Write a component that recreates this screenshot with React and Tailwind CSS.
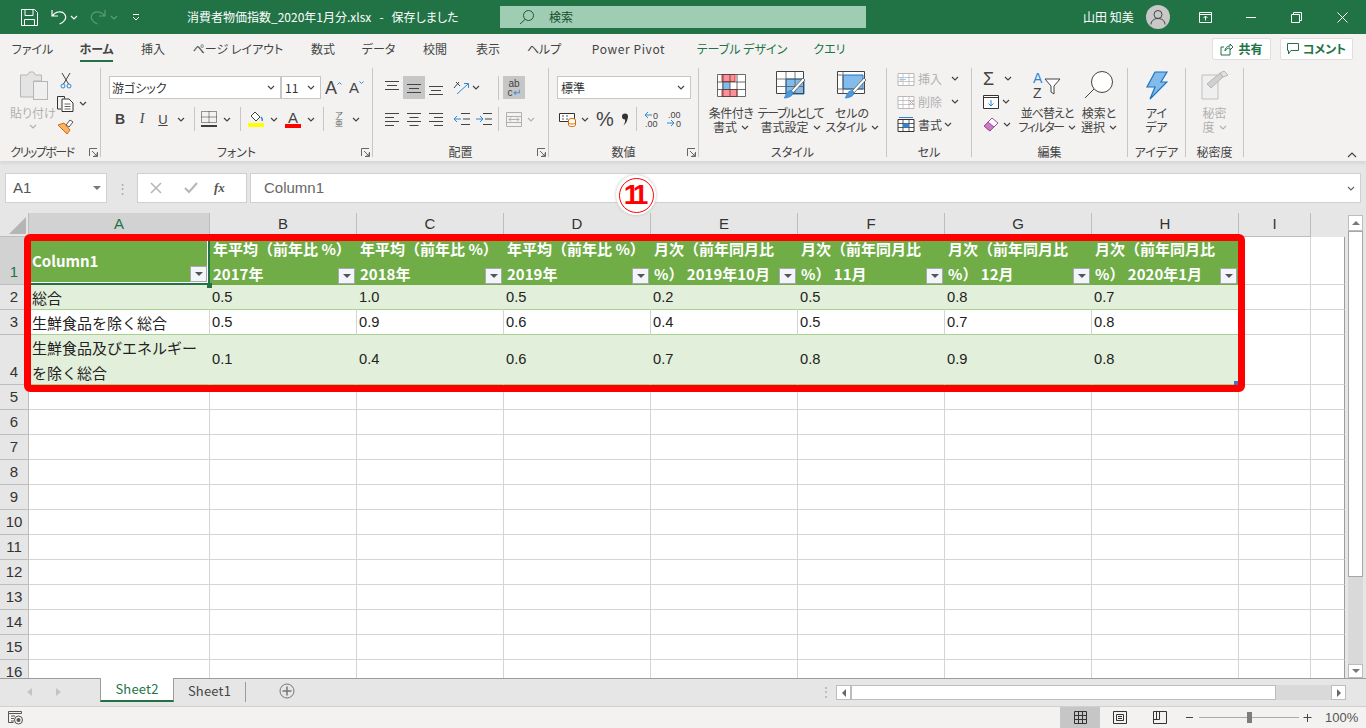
import React from 'react';

const F = '[font-family:"Noto_Sans_CJK_JP","Noto_Sans",sans-serif]';
const P = '[font-feature-settings:"palt"]';

const Chev = ({ c = '#444', className = '' }) => (
  <svg width="8" height="5" viewBox="0 0 8 5" className={`shrink-0 ${className}`}><path d="M1 1l3 3 3-3" fill="none" stroke={c} strokeWidth="1.2" /></svg>
);

const Launcher = ({ className = '' }) => (
  <svg width="9" height="9" viewBox="0 0 9 9" className={`shrink-0 ${className}`}><path d="M.5 8V.5H8M8.500 4v4.500H4M3 3l5 5M8 5v3H5" fill="none" stroke="#666" /></svg>
);

const Sep = ({ h = 'h-[24px]', ml = '' }) => <div className={`w-px ${h} bg-[#c8c6c4] shrink-0 ${ml}`} />;

const HAlign = ({ a }) => {
  const lines = [14, 9, 14, 9];
  return (
    <svg width="16" height="14" viewBox="0 0 16 14">
      {lines.map((x, i) => {
        const sx = a === 'l' ? 1 : a === 'c' ? (16 - x) / 2 : 15 - x;
        return <path key={i} d={`M${sx} ${1.5 + i * 4}h${x}`} stroke="#444" strokeWidth="1" />;
      })}
    </svg>
  );
};

const VAlign = ({ y }) => (
  <svg width="16" height="16" viewBox="0 0 16 16">
    <path d={`M1 ${y}.5h14M3 ${y + 4}.5h10M1 ${y + 8}.5h14`} stroke="#444" />
  </svg>
);

const ClipIcon = () => (
  <svg width="28" height="30" viewBox="0 0 28 30">
    <path d="M.5 4h7l2-3h4l2 3h6v6h-8v16H.5z" fill="#e4e4e4" stroke="#b5b5b5" />
    <rect x="13.500" y="10.500" width="14" height="18" fill="#efefef" stroke="#b5b5b5" />
  </svg>
);

const Scissors = () => (
  <svg width="12" height="17" viewBox="0 0 12 17"><path d="M2 1l6.500 11M10 1L3.500 12" stroke="#444" fill="none" /><circle cx="3" cy="14" r="2" fill="none" stroke="#2b88d8" /><circle cx="9" cy="14" r="2" fill="none" stroke="#2b88d8" /></svg>
);

const CopyIcon = () => (
  <svg width="17" height="16" viewBox="0 0 17 16"><path d="M4 13H.5V.5h7v2" fill="none" stroke="#333" /><path d="M5 3h7l4 4v8.500H5z" fill="#fff" stroke="#333" /><path d="M7.500 8h6M7.500 10.500h6M7.500 13h6" stroke="#666" /></svg>
);

const BrushIcon = () => (
  <svg width="17" height="16" viewBox="0 0 17 16"><path d="M1 6l6-2 6 7-3 4z" fill="#f7b26b" stroke="#d86a00" /><path d="M9 6l4-5 3 2-4 5z" fill="#fff" stroke="#555" /></svg>
);

const CondIcon = () => (
  <svg width="29" height="23" viewBox="0 0 29 23">
    <path fill="#fff" d="M0 0h29v23H0z" />
    <path d="M5 .5h13v7H5z" fill="#ff8f97" stroke="#d13438" />
    <path d="M5 8h8v7H5z" fill="#83bcea" />
    <path d="M5 15.500h15v7H5z" fill="#ff8f97" stroke="#d13438" />
    <path d="M.5.500h28v22H.5zM.5 8h28M.5 15.500h28M6 .500v22M13 .500v22M20 .500v22" fill="none" stroke="#444" strokeWidth="0.800" />
  </svg>
);

const TableIcon = ({ variant }) => (
  <svg width="30" height="28" viewBox="0 0 30 28">
    <path fill="#fff" d="M1 1h27v22H1z" />
    {variant === 'table'
      ? <path d="M10 8h18v15H10z" fill="#83bcea" stroke="#1a73c4" />
      : <path d="M6 4h20v14H6z" fill="#83bcea" stroke="#1a73c4" />}
    <path d="M.5.500h27v22H.5z" fill="none" stroke="#444" />
    <path d={variant === 'table' ? 'M.5 8h27M.5 15.500h27M10 .500v22M19 .500v22' : 'M.5 4h5M6 .500v22M.5 18h27'} fill="none" stroke="#555" strokeWidth="0.800" />
    <path d="M15 20L27 7l2 2-12 13z" fill="#fff" stroke="#555" strokeWidth="0.800" />
    <path d="M8 27c2-2 1-5 5-7 2-1 4 0 4 2 0 3-5 5-9 5z" fill="#4c98d8" stroke="#2b7cd3" strokeWidth="0.600" />
  </svg>
);

const CellIcon = ({ kind }) => {
  const g = kind !== 'format';
  const s = g ? '#b9b9b9' : '#333';
  return (
    <svg width="18" height="15" viewBox="0 0 18 15">
      <path d="M1 2.500h16v12H1z" fill="#fff" stroke={s} />
      <path d="M1 6.500h16M1 10.500h16M6 2.500v12M12 2.500v12" stroke={s} strokeWidth="0.800" />
      {kind === 'format' && <path d="M6 6.500h6v4H6z" fill="#2b88d8" />}
      {kind === 'format' && <path d="M2 .500h14" stroke="#2b88d8" />}
      {kind === 'insert' && <path d="M9 8.500H3m2-2l-2 2 2 2" fill="none" stroke="#9fc7ea" />}
      {kind === 'del' && <path d="M12 6l5 5m0-5l-5 5" fill="none" stroke="#c9a0a0" />}
    </svg>
  );
};

const Combo = ({ w, label, pl = 'pl-[2px]' }) => (
  <div className={`${w} h-[23px] bg-white border border-[#c8c6c4] flex items-center justify-between ${pl} pr-[5px] shrink-0`}>
    <span className="text-[12px] leading-none text-[#333]">{label}</span>
    <Chev />
  </div>
);

const Big = ({ icon, l1, l2, chev, w, c = '#444', gray = false, t1 = '', t2 = '' }) => (
  <div className={`${w} shrink-0 flex flex-col items-center`}>
    <div className="h-[36px] flex items-center justify-center">{icon}</div>
    <div className={`mt-[3px] text-[12px] leading-[14px] whitespace-nowrap ${t1} ${gray ? 'text-[#b1b1b1]' : 'text-[#444]'}`}>{l1}</div>
    <div className={`text-[12px] leading-[14px] whitespace-nowrap flex items-center gap-[4px] ${gray ? 'text-[#b1b1b1]' : 'text-[#444]'}`}><span className={t2}>{l2}</span>{chev && <Chev c={c} />}</div>
  </div>
);

const Group = ({ w, label, launcher, children }) => (
  <div className={`${w} shrink-0 h-full flex`}>
    <div className="flex-1 min-w-0 flex flex-col">
      <div className="flex-1 min-h-0 pt-[12px] flex">{children}</div>
      <div className="h-[18px] relative flex items-center justify-center text-[12px] leading-none text-[#444] whitespace-nowrap">
        {label}
        {launcher && <Launcher className="absolute right-[2px] top-[5px]" />}
      </div>
    </div>
    <div className="w-px h-[89px] mt-[4px] bg-[#c8c6c4]" />
  </div>
);

const tabs = [
  ['ファイル', 'ml-[14px] w-[37px]', ''], ['ホーム', 'ml-[29px] w-[33px]', 'font-bold'], ['挿入', 'ml-[27px] w-[26px]', ''], ['ページ レイアウト', 'ml-[29px] w-[86px]', ''],
  ['数式', 'ml-[29px] w-[26px]', ''], ['データ', 'ml-[26px] w-[33px]', ''], ['校閲', 'ml-[27px] w-[26px]', ''], ['表示', 'ml-[27px] w-[26px]', ''], ['ヘルプ', 'ml-[27px] w-[32px]', ''],
  ['Power Pivot', 'ml-[31px] w-[75px]', 'tracking-[0.6px]'], ['テーブル デザイン', 'ml-[32px] w-[88px]', 'text-[#217346]'], ['クエリ', 'ml-[29px] w-[29px]', 'text-[#217346]'],
];

const TitleBar = () => (
  <div className={`h-[34px] bg-[#217346] text-white flex items-center shrink-0 ${P}`}>
    <svg width="17" height="17" viewBox="0 0 17 17" className="ml-[21px]"><path d="M.5.500h13l3 3v13H.5zM4 .500v6h8v-6M3.500 16.500v-6h10v6" fill="none" stroke="#fff" /></svg>
    <svg width="18" height="18" viewBox="0 0 18 18" className="ml-[12px]"><path d="M2 2v6h6M2.500 8c2-4 9-6 12-2 3 4 0 8-5 10" fill="none" stroke="#fff" strokeWidth="1.200" /></svg>
    <Chev c="#fff" className="ml-[2px]" />
    <svg width="17" height="18" viewBox="0 0 17 18" className="ml-[12px]"><path d="M15 2v6H9M14.500 8c-2-4-9-6-12-2-3 4 0 8 5 10" fill="none" stroke="#5d9a7b" strokeWidth="1.200" /></svg>
    <Chev c="#5d9a7b" className="ml-[3px]" />
    <svg width="8" height="8" viewBox="0 0 8 8" className="ml-[14px]"><path d="M1 1.500h6M1 4l3 3 3-3" fill="none" stroke="#fff" /></svg>
    <div className="ml-[47px] w-[313px] text-[12px] leading-none whitespace-pre">消費者物価指数_2020年1月分.xlsx   -   保存しました</div>
    <div className="w-[366px] h-[22px] bg-[#9fcdb3] flex items-center text-[#174f30] text-[12px]">
      <svg width="16" height="16" viewBox="0 0 16 16" className="ml-[19px]"><circle cx="9.500" cy="6.500" r="5" fill="none" stroke="#1c5a38" /><path d="M6 10.500L1 15" stroke="#1c5a38" /></svg>
      <span className="ml-[14px]">検索</span>
    </div>
    <div className="ml-[217px] w-[52px] text-[12px] leading-none whitespace-nowrap">山田 知美</div>
    <div className="ml-[11px] w-[24px] h-[24px] rounded-full bg-[#c8c8c8] flex items-center justify-center">
      <svg width="16" height="16" viewBox="0 0 16 16"><circle cx="8" cy="5.500" r="4" fill="none" stroke="#444" /><path d="M1 15.500c0-8 14-8 14 0" fill="none" stroke="#444" /></svg>
    </div>
    <svg width="13" height="11" viewBox="0 0 13 11" className="ml-[29px]"><path d="M.5.500h12v10H.5zM.5 2.500h12M6.500 8.500v-4M4.500 6l2-2 2 2" fill="none" stroke="#fff" /></svg>
    <div className="ml-[34px] w-[10px] h-px bg-white" />
    <svg width="11" height="11" viewBox="0 0 11 11" className="ml-[35px]"><path d="M.5 2.500h8v8h-8zM2.500 2.500v-2h8v8h-2" fill="none" stroke="#fff" /></svg>
    <svg width="11" height="11" viewBox="0 0 11 11" className="ml-[35px]"><path d="M.5.500l10 10m0-10l-10 10" stroke="#fff" /></svg>
  </div>
);

const TabRow = () => (
  <div className={`h-[30px] bg-[#f3f2f1] flex items-center shrink-0 text-[12px] text-[#444] ${P}`}>
    {tabs.map(([t, ml, cls]) => (
      <div key={t} className={`${ml} ${cls} shrink-0 relative whitespace-nowrap h-full flex items-center justify-center leading-none`}>
        {t}
        {t === 'ホーム' && <div className="absolute left-0 right-0 bottom-[2px] h-[2px] bg-[#217346]" />}
      </div>
    ))}
    <div className="ml-auto flex items-center gap-[9px] mr-[13px]">
      <div className="w-[59px] h-[22px] bg-white border border-[#e1dfdd] rounded-[2px] flex items-center justify-center gap-[5px] text-[#217346] font-bold">
        <svg width="13" height="13" viewBox="0 0 13 13"><path d="M10 7v5H1V4h3M5 8c0-3 2-5 5-5V1l3 3-3 3V5C8 5 6 6 5 8z" fill="none" stroke="#217346" /></svg>
        共有
      </div>
      <div className="w-[73px] h-[22px] bg-white border border-[#e1dfdd] rounded-[2px] flex items-center justify-center gap-[4px] text-[#217346] font-bold">
        <svg width="12" height="12" viewBox="0 0 12 12"><path d="M.5.500h11v7H4L1.500 11V7.500h-1z" fill="none" stroke="#217346" /></svg>
        コメント
      </div>
    </div>
  </div>
);

const Ribbon = () => (
  <div className={`h-[97px] bg-[#f3f2f1] flex shrink-0 shadow-[0_3px_2px_#d9d9d9] relative z-10 ${P}`}>
    <Group w="w-[101px]" label={<span className="-ml-[16px] tracking-[-1.5px]">クリップボード</span>} launcher>
      <div className="w-[57px] pl-[20px] -mt-[5px] flex flex-col items-start">
        <ClipIcon />
        <div className="-ml-[10px] mt-[5px] text-[12px] leading-[14px] text-[#b1b1b1] whitespace-nowrap">貼り付け</div>
        <Chev c="#b1b1b1" className="mt-[4px] ml-[9px]" />
      </div>
      <div className="flex flex-col -mt-[7px]">
        <div className="h-[23px] w-[17px] flex items-center justify-center"><Scissors /></div>
        <div className="h-[23px] flex items-center gap-[5px]"><CopyIcon /><Chev /></div>
        <div className="h-[23px] flex items-center"><BrushIcon /></div>
      </div>
    </Group>
    <Group w="w-[272px]" label="フォント" launcher>
      <div className="pl-[8px] flex flex-col">
        <div className="flex items-center">
          <Combo w="w-[172px]" label="游ゴシック" />
          <Combo w="w-[40px]" label="11" pl="pl-[3px]" />
          <span className="ml-[4px] text-[18px] leading-none text-[#444] font-['Liberation_Sans']">A</span>
          <svg width="5" height="4" viewBox="0 0 5 4" className="-mt-[10px]"><path d="M.5 3.500l2-2 2 2" fill="none" stroke="#2b88d8" /></svg>
          <span className="ml-[7px] text-[15px] leading-none text-[#444] font-['Liberation_Sans']">A</span>
          <svg width="5" height="4" viewBox="0 0 5 4" className="-mt-[10px]"><path d="M.5.500l2 2 2-2" fill="none" stroke="#2b88d8" /></svg>
        </div>
        <div className="mt-[8px] h-[24px] flex items-center text-[#444]">
          <span className="w-[22px] text-center text-[14px] font-bold leading-none font-['Liberation_Sans']">B</span>
          <span className="w-[22px] text-center text-[14px] italic leading-none font-['Liberation_Serif']">I</span>
          <span className="w-[20px] text-center text-[13px] underline leading-none font-['Liberation_Sans']">U</span>
          <Chev className="ml-[4px]" />
          <Sep ml="ml-[9px]" />
          <svg width="16" height="16" viewBox="0 0 16 16" className="ml-[6px]"><path d="M.5.500h15v11H.500zM8 .500v11M.5 6h15" fill="none" stroke="#333" strokeDasharray="1 1" /><path d="M0 15h16" stroke="#000" strokeWidth="1.500" /></svg>
          <Chev className="ml-[6px]" />
          <Sep ml="ml-[9px]" />
          <div className="ml-[7px] w-[16px] flex flex-col items-center">
            <svg width="15" height="11" viewBox="0 0 15 11"><path d="M2 5l4-4 5 5-4 4z" fill="#fff" stroke="#444" /><path d="M12 6c1 1 2 2 1 4" fill="none" stroke="#2b88d8" strokeWidth="1.500" /></svg>
            <div className="w-[16px] h-[4px] bg-[#ffff00] mt-[1px]" />
          </div>
          <Chev className="ml-[6px]" />
          <div className="ml-[7px] w-[16px] flex flex-col items-center">
            <span className="text-[15px] leading-[13px] font-['Liberation_Sans']">A</span>
            <div className="w-[16px] h-[4px] bg-[#ff0000]" />
          </div>
          <Chev className="ml-[6px]" />
          <Sep ml="ml-[8px]" />
          <div className="ml-[7px] w-[16px] flex flex-col items-center text-[8px] leading-[8px] text-[#666]"><span>ア</span><span>亜</span></div>
          <Chev className="ml-[5px]" />
        </div>
      </div>
    </Group>
    <Group w="w-[176px]" label="配置" launcher>
      <div className="pl-[8px] flex flex-col">
        <div className="h-[23px] flex items-center">
          <div className="w-[22px] flex justify-center"><VAlign y={1} /></div>
          <div className="w-[22px] h-[23px] bg-[#c6c6c6] flex items-center justify-center"><VAlign y={4} /></div>
          <div className="w-[22px] flex justify-center"><VAlign y={6} /></div>
          <svg width="18" height="16" viewBox="0 0 18 16" className="ml-[6px]"><path d="M1 8l5-6M3 2l4 4" stroke="#444" fill="none" /><path d="M4 14L15 4M11 3.500h4.500V8" stroke="#2b88d8" fill="none" /></svg>
          <Chev className="ml-[1px]" />
          <Sep ml="ml-[18px]" />
          <div className="ml-[4px] w-[22px] h-[23px] bg-[#c6c6c6] flex flex-col items-center justify-center text-[10px] leading-[9px] text-[#444] font-['Liberation_Sans']"><span>ab</span><span>c<span className="text-[#2b88d8]">↵</span></span></div>
        </div>
        <div className="mt-[8px] h-[24px] flex items-center">
          <div className="w-[22px] flex justify-center"><HAlign a="l" /></div>
          <div className="w-[22px] flex justify-center"><HAlign a="c" /></div>
          <div className="w-[22px] flex justify-center"><HAlign a="r" /></div>
          <svg width="16" height="14" viewBox="0 0 16 14" className="ml-[7px]"><path d="M7 1.500h9M9 7h7M7 12.500h9" stroke="#444" /><path d="M7 7H0m3-3L0 7l3 3" fill="none" stroke="#2b88d8" /></svg>
          <svg width="16" height="14" viewBox="0 0 16 14" className="ml-[6px]"><path d="M7 1.500h9M9 7h7M7 12.500h9" stroke="#444" /><path d="M0 7h7M4 4l3 3-3 3" fill="none" stroke="#2b88d8" /></svg>
          <Sep ml="ml-[6px]" />
          <svg width="16" height="15" viewBox="0 0 16 15" className="ml-[7px]"><path d="M.5.500h15v14H.5zM.5 4.500h15M.5 10.500h15M3 7.500h10M5 5.500l-2 2 2 2M11 5.500l2 2-2 2" fill="none" stroke="#b1b1b1" /></svg>
          <Chev c="#b1b1b1" className="ml-[5px]" />
        </div>
      </div>
    </Group>
    <Group w="w-[150px]" label="数値" launcher>
      <div className="pl-[8px] flex flex-col">
        <Combo w="w-[134px]" label="標準" pl="pl-[3px]" />
        <div className="mt-[8px] h-[24px] flex items-center text-[#444]">
          <svg width="18" height="16" viewBox="0 0 18 16" className="ml-[2px]"><path d="M.5 2.500h15v8H.5z" fill="#fff" stroke="#333" /><path d="M3 5h2M3 8h2M7 5h2M7 8h2" stroke="#555" /><ellipse cx="13" cy="9" rx="3.500" ry="1.500" fill="#fff" stroke="#d86a00" /><path d="M9.500 9v5c0 2 7 2 7 0V9M9.500 11.500c0 2 7 2 7 0" fill="#fff" stroke="#d86a00" /></svg>
          <Chev className="ml-[4px]" />
          <span className="ml-[7px] w-[18px] text-[20px] leading-none font-['Liberation_Sans']">%</span>
          <svg width="8" height="13" viewBox="0 0 8 13" className="ml-[7px]"><circle cx="4" cy="3.500" r="3" fill="#333" /><path d="M6.500 3.500c.5 4-1.500 7-4 9 1-2 2-4 1.500-6z" fill="#333" /></svg>
          <Sep ml="ml-[7px]" />
          <svg width="16" height="16" viewBox="0 0 16 16" className="ml-[7px]"><path d="M8 4H1m3-3L1 4l3 3" fill="none" stroke="#2b88d8" /><text x="9" y="8" fontSize="9" fill="#444" fontFamily="Liberation Sans">0</text><text x="1" y="15.500" fontSize="9" fill="#444" fontFamily="Liberation Sans">.00</text></svg>
          <svg width="16" height="16" viewBox="0 0 16 16" className="ml-[7px]"><text x="1" y="7" fontSize="9" fill="#444" fontFamily="Liberation Sans">.00</text><path d="M0 12h7M4 9l3 3-3 3" fill="none" stroke="#2b88d8" /><text x="9" y="15.500" fontSize="9" fill="#444" fontFamily="Liberation Sans">0</text></svg>
        </div>
      </div>
    </Group>
    <Group w="w-[188px]" label="スタイル">
      <div className="flex -mt-[9px] pl-[4px]">
        <Big w="w-[56px]" icon={<CondIcon />} l1="条件付き" l2="書式" chev t1="tracking-[-0.5px]" />
        <Big w="w-[63px]" icon={<TableIcon variant="table" />} l1="テーブルとして" l2="書式設定" chev t1="tracking-[-1.3px]" />
        <Big w="w-[60px]" icon={<TableIcon variant="cell" />} l1="セルの" l2="スタイル" chev t2="tracking-[-0.5px]" />
      </div>
    </Group>
    <Group w="w-[85px]" label="セル">
      <div className="flex flex-col -mt-[9px] pl-[10px] text-[12px] leading-none">
        <div className="h-[23px] flex items-center text-[#b1b1b1]"><CellIcon kind="insert" /><span className="ml-[3px] w-[33px]">挿入</span><Chev /></div>
        <div className="h-[23px] flex items-center text-[#b1b1b1]"><CellIcon kind="del" /><span className="ml-[3px] w-[33px]">削除</span><Chev /></div>
        <div className="h-[23px] flex items-center text-[#444]"><CellIcon kind="format" /><span className="ml-[3px] w-[26px]">書式</span><Chev /></div>
      </div>
    </Group>
    <Group w="w-[156px]" label="編集">
      <div className="flex">
        <div className="flex flex-col -mt-[9px] pl-[11px] w-[46px]">
          <div className="h-[23px] flex items-center gap-[6px]"><span className="w-[15px] text-[18px] leading-none text-[#444] font-['Liberation_Sans']">Σ</span><Chev /></div>
          <div className="h-[23px] flex items-center gap-[3px]"><svg width="16" height="14" viewBox="0 0 16 14"><path d="M.5.500h15v13H.5zM.5 2.500h15" fill="#fff" stroke="#333" /><path d="M8 5v6M5.500 8.500L8 11l2.500-2.500" fill="none" stroke="#2b88d8" /></svg><Chev /></div>
          <div className="h-[23px] flex items-center gap-[4px]"><svg width="16" height="15" viewBox="0 0 16 15"><path d="M1 9l8-8 6 5-8 8z" fill="#fff" stroke="#a4489e" /><path d="M1 9l4-4 6 5-4 4z" fill="#c77cc4" stroke="#a4489e" /></svg><Chev /></div>
        </div>
        <div className="-mt-[9px]">
          <Big w="w-[58px]" t1="tracking-[-1px]" t2="tracking-[-1.5px]" icon={<svg width="30" height="30" viewBox="0 0 30 30"><text x="1" y="13" fontSize="14" fill="#2b88d8" fontFamily="Liberation Sans">A</text><text x="1" y="28" fontSize="14" fill="#444" fontFamily="Liberation Sans">Z</text><path d="M13 9h15l-6 7v8l-3-2v-6z" fill="#fff" stroke="#444" /></svg>} l1="並べ替えと" l2="フィルター" chev />
        </div>
        <div className="-mt-[9px]">
          <Big w="w-[46px]" icon={<svg width="30" height="30" viewBox="0 0 30 30"><circle cx="18" cy="12" r="10.500" fill="#fff" stroke="#444" /><path d="M10 19L1 28" stroke="#444" /></svg>} l1="検索と" l2="選択" chev />
        </div>
      </div>
    </Group>
    <Group w="w-[58px]" label="アイデア">
      <div className="-mt-[9px] w-full">
        <Big w="w-full" icon={<svg width="22" height="29" viewBox="0 0 22 29"><path d="M9 1h12l-6 10h6L4 28l5-12H1z" fill="#83bcea" stroke="#1a73c4" strokeWidth="1.200" /></svg>} l1="アイ" l2="デア" />
      </div>
    </Group>
    <Group w="w-[58px]" label="秘密度">
      <div className="-mt-[9px] w-full">
        <Big w="w-full" gray c="#b1b1b1" icon={<svg width="28" height="30" viewBox="0 0 28 30"><path d="M1 5h16v24H1z" fill="#efefef" stroke="#c0c0c0" /><path d="M6 14L19 3l3 4-12 11z" fill="#d0d0d0" stroke="#b5b5b5" /><path d="M19 3l4-2 4 4-5 2z" fill="#e2e2e2" stroke="#b5b5b5" /></svg>} l1="秘密" l2="度" chev />
      </div>
    </Group>
    <div className="flex-1 flex items-end justify-end pb-[3px] pr-[9px]">
      <svg width="10" height="6" viewBox="0 0 10 6"><path d="M1 5l4-4 4 4" fill="none" stroke="#444" strokeWidth="1.200" /></svg>
    </div>
  </div>
);

const FormulaBar = () => (
  <div className="h-[52px] bg-[#e6e6e6] flex items-start pt-[12px] pl-[5px] pr-[5px] shrink-0 font-['Liberation_Sans']">
    <div className="w-[102px] h-[30px] bg-white border border-[#d0d0d0] flex items-center justify-between pl-[7px] pr-[5px] text-[15px] text-[#555]">
      A1
      <div className="w-0 h-0 border-l-[4px] border-r-[4px] border-t-[4px] border-l-transparent border-r-transparent border-t-[#777]" />
    </div>
    <div className="w-[30px] h-[30px] flex items-center justify-center text-[#aaa] text-[13px] leading-none">⋮</div>
    <div className="w-[110px] h-[30px] bg-white border border-[#d0d0d0] flex items-center shrink-0">
      <svg width="12" height="12" viewBox="0 0 12 12" className="ml-[12px]"><path d="M1 1l10 10m0-10L1 11" stroke="#b5b5b5" strokeWidth="1.500" /></svg>
      <svg width="14" height="12" viewBox="0 0 14 12" className="ml-[22px]"><path d="M1 6l4 4 8-9" fill="none" stroke="#b5b5b5" strokeWidth="2" /></svg>
      <span className="ml-[16px] text-[13px] italic font-bold font-['Liberation_Serif'] text-[#555]">fx</span>
    </div>
    <div className="ml-[3px] flex-1 h-[30px] bg-white border border-[#d0d0d0] flex items-center justify-between pl-[13px] pr-[5px] text-[15px] text-[#666]">
      Column1
      <Chev c="#666" />
    </div>
  </div>
);

const cols = ['A', 'B', 'C', 'D', 'E', 'F', 'G', 'H', 'I'];
const gridCols = 'grid grid-cols-[29px_181px_147px_147px_147px_147px_147px_147px_147px_72px_34px]';
const cellBase = 'border-r border-b border-[#d4d4d4] overflow-hidden';
const lastCell = 'border-b border-r border-b-[#d4d4d4] border-r-[#9c9c9c]';

const headers = [
  ['Column1'],
  ['年平均（前年比 %）', '2017年'], ['年平均（前年比 %）', '2018年'], ['年平均（前年比 %）', '2019年'],
  ['月次（前年同月比', '%） 2019年10月'], ['月次（前年同月比', '%） 11月'], ['月次（前年同月比', '%） 12月'], ['月次（前年同月比', '%） 2020年1月'],
];

const rows = [
  { n: 2, h: 'h-[25px]', cells: ['総合', '0.5', '1.0', '0.5', '0.2', '0.5', '0.8', '0.7'], band: true },
  { n: 3, h: 'h-[25px]', cells: ['生鮮食品を除く総合', '0.5', '0.9', '0.6', '0.4', '0.5', '0.7', '0.8'], band: false },
  { n: 4, h: 'h-[50px]', cells: [['生鮮食品及びエネルギー', 'を除く総合'], '0.1', '0.4', '0.6', '0.7', '0.8', '0.9', '0.8'], band: true },
];

const RowHead = ({ n, h, sel }) => (
  <div className={`${h} ${sel ? 'bg-[#d2d2d2] text-[#217346]' : 'bg-[#e6e6e6] text-[#333]'} border-r border-b border-[#bdbdbd] flex items-end justify-center text-[15px] leading-[24px] font-['Liberation_Sans']`}>{n}</div>
);

const FilterBtn = () => (
  <div className="absolute right-[1px] bottom-[1px] w-[17px] h-[16px] bg-[#f2f5fa] border border-[#a9a9a9] flex items-center justify-center">
    <div className="w-0 h-0 border-l-[4px] border-r-[4px] border-t-[4px] border-l-transparent border-r-transparent border-t-[#555]" />
  </div>
);

const Sheet = () => (
  <div className={`flex-1 min-h-0 bg-[#e6e6e6] flex ${F} relative`}>
    <div className="flex-1 min-w-0 overflow-hidden">
      <div className={`${gridCols} h-[24px]`}>
        <div className="bg-[#e6e6e6] border-r border-b border-[#bdbdbd] flex items-end justify-end pr-[2px] pb-[2px]">
          <svg width="17" height="17" viewBox="0 0 17 17"><path d="M17 0v17H0z" fill="#b5b5b5" /></svg>
        </div>
        {cols.map((c) => (
          <div key={c} className={`${c === 'A' ? 'bg-[#d2d2d2] text-[#217346]' : 'bg-[#e6e6e6] text-[#333]'} border-r border-b border-[#bdbdbd] flex items-center justify-center text-[15px] font-['Liberation_Sans']`}>{c}</div>
        ))}
      </div>
      <div className={`${gridCols} h-[48px] bg-white`}>
        <RowHead n={1} h="h-[48px]" sel />
        {headers.map((h, i) => (
          <div key={i} className={`relative bg-[#70ad47] text-white font-bold text-[15px] leading-[25px] pl-[3px] border-r border-[#70ad47] whitespace-nowrap flex flex-col justify-center overflow-hidden ${i === 0 ? 'border-b-2 border-b-[#217346] !border-r-2 !border-r-[#217346] shadow-[inset_-1px_-1px_0_#fff]' : ''}`}>
            {h.map((t, j) => <div key={j} className="whitespace-pre">{t}</div>)}
            <FilterBtn />
          </div>
        ))}
        <div className={cellBase} />
        <div className={lastCell} />
      </div>
      {rows.map((r) => (
        <div key={r.n} className={`${gridCols} ${r.h} bg-white`}>
          <RowHead n={r.n} h={r.h} />
          {r.cells.map((c, i) => (
            <div key={i} className={`${r.band ? 'bg-[#e2efda] border-[#e2efda]' : 'bg-white border-[#d4d4d4]'} border-r border-b !border-b-[#a9d08e] flex flex-col justify-center text-[#222] whitespace-nowrap overflow-hidden ${i === 0 ? 'text-[15px] leading-[25px] pl-[3px]' : "leading-none font-['Liberation_Sans'] text-[14.67px] pl-[2px]"}`}>
              {Array.isArray(c) ? c.map((t) => <div key={t}>{t}</div>) : c}
            </div>
          ))}
          <div className={cellBase} />
          <div className={lastCell} />
        </div>
      ))}
      {[5, 6, 7, 8, 9, 10, 11, 12, 13, 14, 15, 16].map((n) => (
        <div key={n} className={`${gridCols} h-[25px] bg-white`}>
          <RowHead n={n} h="h-[25px]" />
          {cols.map((c) => <div key={c} className={cellBase} />)}
          <div className={lastCell} />
        </div>
      ))}
    </div>

    <div className="w-[21px] shrink-0 bg-[#e6e6e6] pl-[3px] pr-[3px] pt-[2px] flex flex-col">
      <div className="h-[16px] bg-white border border-[#bdbdbd] flex items-center justify-center"><div className="w-0 h-0 border-l-[4px] border-r-[4px] border-b-[4px] border-l-transparent border-r-transparent border-b-[#777]" /></div>
      <div className="h-[346px] bg-white border border-[#a6a6a6]" />
      <div className="flex-1 bg-[#d9d9d9]" />
      <div className="h-[14px] bg-white border border-[#bdbdbd] flex items-center justify-center"><div className="w-0 h-0 border-l-[4px] border-r-[4px] border-t-[4px] border-l-transparent border-r-transparent border-t-[#777]" /></div>
    </div>

    <div className="absolute left-[24px] top-[21px] w-[1221px] h-[158px] border-[7px] border-[#ff0000] rounded-[6px] pointer-events-none" />
    <div className="absolute left-[207px] top-[70px] w-[5px] h-[5px] bg-[#217346]" />
    <div className="absolute left-[616px] -top-[38px] w-[40px] h-[40px] rounded-full bg-white shadow-[0_0_3px_#bbb] flex items-center justify-center">
      <div className="w-[35px] h-[35px] rounded-full border-[1.500px] border-[#ff0000] flex items-center justify-center text-[#ff0000] text-[28px] font-bold leading-none font-['Liberation_Sans'] tracking-[-5px] pr-[5px]">11</div>
    </div>
    <div className="absolute left-[1234px] top-[168px] w-[4px] h-[4px] bg-[#4472c4]" />
  </div>
);

const SheetTabs = () => (
  <div className={`h-[28px] bg-[#e6e6e6] border-t border-[#9c9c9c] flex items-start shrink-0 ${F}`}>
    <svg width="5" height="8" viewBox="0 0 5 8" className="ml-[27px] mt-[9px]"><path d="M5 0v8L0 4z" fill="#c4c4c4" /></svg>
    <svg width="5" height="8" viewBox="0 0 5 8" className="ml-[24px] mt-[9px]"><path d="M0 0v8l5-4z" fill="#c4c4c4" /></svg>
    <div className="ml-[39px] w-[74px] h-[24px] -mt-px bg-white border-x border-[#9c9c9c] border-b-2 border-b-[#217346] flex items-center justify-center text-[13px] tracking-[0.2px] text-[#217346]">Sheet2</div>
    <div className="w-[71px] h-[23px] flex items-center justify-center text-[13px] tracking-[0.2px] text-[#444]">Sheet1</div>
    <div className="w-px h-[20px] mt-[3px] bg-[#9c9c9c]" />
    <svg width="16" height="16" viewBox="0 0 16 16" className="ml-[33px] mt-[4px]"><circle cx="8" cy="8" r="7" fill="none" stroke="#777" /><path d="M8 3.500v9M3.500 8h9" stroke="#777" strokeWidth="1.500" /></svg>
    <div className="ml-[525px] mt-[5px] text-[#aaa] text-[12px] leading-[14px] w-[16px]">⋮</div>
    <div className="w-[15px] h-[15px] mt-[6px] bg-white border border-[#bdbdbd] flex items-center justify-center"><div className="w-0 h-0 border-t-[4px] border-b-[4px] border-r-[4px] border-t-transparent border-b-transparent border-r-[#666]" /></div>
    <div className="w-[425px] h-[15px] mt-[6px] bg-white border border-[#bdbdbd]" />
    <div className="w-[55px] h-[15px] mt-[6px] bg-[#d9d9d9]" />
    <div className="w-[15px] h-[15px] mt-[6px] bg-white border border-[#bdbdbd] flex items-center justify-center"><div className="w-0 h-0 border-t-[4px] border-b-[4px] border-l-[4px] border-t-transparent border-b-transparent border-l-[#666]" /></div>
  </div>
);

const StatusBar = () => (
  <div className="h-[22px] bg-[#f3f2f1] border-t border-[#d0d0d0] flex items-center shrink-0 font-['Liberation_Sans']">
    <svg width="15" height="14" viewBox="0 0 15 14" className="ml-[8px]"><path d="M.5.500h13v2H.5zM.5 2.500v9h5" fill="none" stroke="#555" /><path d="M3 5h4M3 7.500h3M3 10h3" stroke="#555" /><circle cx="10.500" cy="9" r="4" fill="none" stroke="#555" /><circle cx="10.500" cy="9" r="2" fill="#555" /></svg>
    <div className="ml-[1037px] w-[40px] h-full bg-[#c6c6c6] flex items-center justify-center">
      <svg width="13" height="13" viewBox="0 0 13 13"><path d="M.5.500h12v12H.5zM.5 4.500h12M.5 8.500h12M4.500.500v12M8.500.500v12" fill="none" stroke="#333" /></svg>
    </div>
    <div className="w-[40px] flex justify-center">
      <svg width="14" height="13" viewBox="0 0 14 13"><path d="M.5.500h13v12H.5zM3.500 3.500h7v6h-7zM5 5.500h4M5 7.500h4" fill="none" stroke="#333" /></svg>
    </div>
    <div className="w-[40px] flex justify-center">
      <svg width="14" height="13" viewBox="0 0 14 13"><path d="M.5.500h13v12H.5zM.5 8.500h6v-8" fill="none" stroke="#333" /><path d="M3.500.500v8" stroke="#333" /></svg>
    </div>
    <div className="ml-[6px] w-[7px] h-px bg-[#444]" />
    <div className="ml-[6px] w-[100px] h-px bg-[#aaa] flex items-center pl-[48px]"><div className="w-[5px] h-[11px] bg-[#7d7d7d] shrink-0" /></div>
    <svg width="9" height="9" viewBox="0 0 9 9" className="ml-[4px]"><path d="M4.500 1v8M.5 4.500h8" stroke="#444" /></svg>
    <div className="ml-[13px] text-[13px] text-[#555] leading-none">100%</div>
  </div>
);

export default function App() {
  return (
    <div className={`w-[1366px] h-[728px] overflow-hidden flex flex-col ${F}`}>
      <TitleBar />
      <TabRow />
      <Ribbon />
      <FormulaBar />
      <Sheet />
      <SheetTabs />
      <StatusBar />
    </div>
  );
}
